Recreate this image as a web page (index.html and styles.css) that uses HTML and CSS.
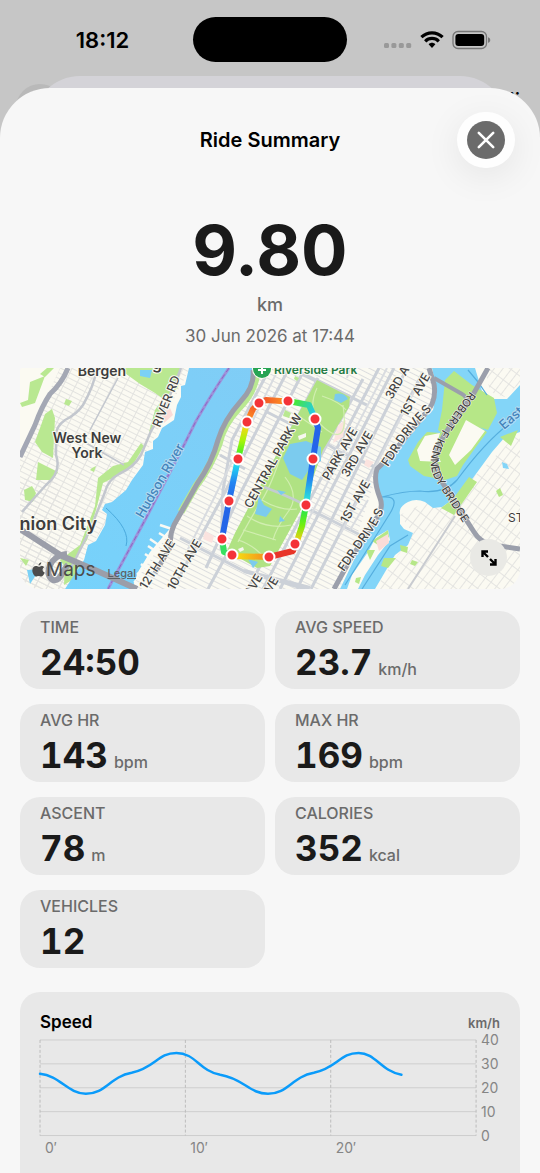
FILE: index.html
```html
<!DOCTYPE html>
<html lang="en">
<head>
    <meta charset="UTF-8">
    <meta name="viewport" content="width=device-width, initial-scale=1.0">
    <title>Ride Summary</title>
    <link rel="stylesheet" href="styles.css">
</head>
<body>
    <div class="status-bar">
        <div class="status-time">18:12</div>
        <div class="island"></div>
        <div class="status-icons">
            <svg width="28" height="18" viewBox="0 0 28 18" fill="#999">
                <rect x="0" y="12" width="5" height="5" rx="1.5"/>
                <rect x="7.4" y="12" width="5" height="5" rx="1.5"/>
                <rect x="14.8" y="12" width="5" height="5" rx="1.5"/>
                <rect x="22.2" y="12" width="5" height="5" rx="1.5"/>
            </svg>
            <svg width="24" height="18" viewBox="0 0 24 18" fill="none" stroke="#000" stroke-width="3.2">
                <path d="M1.4 6.2C7.5 .3 16.5 .3 22.6 6.2"/>
                <path d="M5.2 10.3C9 6.5 15 6.5 18.8 10.3"/>
                <path d="M8.6 13.2C10.5 11.2 13.5 11.2 15.4 13.2L12 17Z" fill="#000" stroke="none"/>
            </svg>
            <svg width="39" height="20" viewBox="0 0 39 20">
                <rect x="1" y="1.5" width="33.5" height="17" rx="5" fill="none" stroke="#777" stroke-width="1.3"/>
                <rect x="3.4" y="4" width="28.8" height="12" rx="3" fill="#000"/>
                <path d="M36 7.2c3 .6 3 5 0 5.6z" fill="#777"/>
            </svg>
        </div>
    </div>
    <div class="back-layer">
        <span class="back-circle"></span>
        <span class="back-more">···</span>
        <div class="back-sheet"></div>
    </div>

    <main class="sheet">
        <header class="sheet-header">
            <h1>Ride Summary</h1>
            <button class="close-button" aria-label="Close">
                <svg width="38" height="38" viewBox="0 0 38 38">
                    <circle cx="19" cy="19" r="19" fill="#6b6b6b"/>
                    <path d="M11.8 11.8L26.2 26.2M26.2 11.8L11.8 26.2" stroke="#fff" stroke-width="2.6" stroke-linecap="round"/>
                </svg>
            </button>
        </header>

        <section class="distance">
            <div class="distance-value">9.80</div>
            <div class="distance-unit">km</div>
            <div class="ride-date">30 Jun 2026 at 17:44</div>
        </section>

        <section class="map">
            <svg class="map-canvas" viewBox="20 368 500 221">
                <defs>
                    <pattern id="grid-west" width="11" height="5" patternUnits="userSpaceOnUse" patternTransform="rotate(27)">
                        <path d="M0 .5H11M.5 0V5" stroke="#e3e3e0" fill="none"/>
                    </pattern>
                    <pattern id="grid-city" width="16" height="5" patternUnits="userSpaceOnUse" patternTransform="rotate(27)">
                        <path d="M0 .5H16" stroke="#dddedf" fill="none"/>
                    </pattern>
                    <pattern id="grid-east" width="7" height="13" patternUnits="userSpaceOnUse" patternTransform="rotate(37)">
                        <path d="M0 .5H7M.5 0V13" stroke="#e4e4e1" fill="none"/>
                    </pattern>
                    <linearGradient id="river" x1="0" x2="1" y1="1" y2="0">
                        <stop offset="0" stop-color="#76d2fb"/>
                        <stop offset="1" stop-color="#80cdf6"/>
                    </linearGradient>
                    <linearGradient id="seg1" gradientUnits="userSpaceOnUse" x1="247" y1="422" x2="259" y2="403"><stop stop-color="#ff9a20"/><stop offset="1" stop-color="#f04a2a"/></linearGradient>
                    <linearGradient id="seg2" gradientUnits="userSpaceOnUse" x1="259" y1="0" x2="288" y2="0"><stop stop-color="#f04a2a"/><stop offset="1" stop-color="#ff9a20"/></linearGradient>
                    <linearGradient id="seg3" gradientUnits="userSpaceOnUse" x1="290" y1="401" x2="315" y2="415"><stop stop-color="#4fee10"/><stop offset="1" stop-color="#20c8f8"/></linearGradient>
                    <linearGradient id="seg5" gradientUnits="userSpaceOnUse" x1="0" y1="462" x2="0" y2="503"><stop stop-color="#2465e8"/><stop offset=".4" stop-color="#2386f2"/><stop offset="1" stop-color="#2df0d8"/></linearGradient>
                    <linearGradient id="seg6" gradientUnits="userSpaceOnUse" x1="0" y1="508" x2="0" y2="542"><stop stop-color="#20e550"/><stop offset=".5" stop-color="#70f010"/><stop offset="1" stop-color="#ffc818"/></linearGradient>
                    <linearGradient id="seg8" gradientUnits="userSpaceOnUse" x1="235" y1="0" x2="267" y2="0"><stop stop-color="#f6e010"/><stop offset="1" stop-color="#f48c20"/></linearGradient>
                    <linearGradient id="seg11" gradientUnits="userSpaceOnUse" x1="0" y1="499" x2="0" y2="462"><stop stop-color="#2468e8"/><stop offset=".45" stop-color="#2386f2"/><stop offset="1" stop-color="#22e8f0"/></linearGradient>
                    <linearGradient id="seg12" gradientUnits="userSpaceOnUse" x1="0" y1="456" x2="0" y2="425"><stop stop-color="#38ee28"/><stop offset=".5" stop-color="#a8f40a"/><stop offset="1" stop-color="#ffd418"/></linearGradient>
                </defs>

                <!-- land -->
                <rect x="20" y="368" width="500" height="221" fill="#fbfaf2"/>
                <path d="M60 368H190L132 480L65 589H20V455Z" fill="url(#grid-west)"/>
                <path d="M20 480L56 470L70 589H20Z" fill="url(#grid-west)"/>
                <path d="M257 368H433L435 400L375 480L340 589H130L185 510L215 440Z" fill="url(#grid-city)"/>
                <path d="M520 432L473 478L400 515L413 533L375 589H520Z" fill="url(#grid-east)"/>

                <!-- parks, west side -->
                <g fill="#b9e891">
                    <path d="M30 382L45 376L35 403L22 407L20 403L28 400ZM47 368H54L45 377L40 374Z"/>
                    <path d="M45 414L52 409L55 418L53 458L42 452L35 442Z"/>
                    <path d="M38 462L58 472L52 480H36Z"/>
                    <path d="M118 368H160L180 368L178 388L162 398L155 393L140 384Z"/>
                    <path d="M66 399L72 401L69 406L64 404ZM92 468L96 466L94 472L90 470Z"/>
                    <path d="M24 490L32 486L36 493L33 502L25 500Z"/>
                    <path d="M141 443L144 446L134 463L119 475L103 483L96 510L87 540L67 570L60 560L80 545L95 506L98 478L113 466L128 462Z"/>
                    <path d="M155 410L163 398L156 425L149 432ZM65 560L80 565L72 580L64 585ZM20 558L29 560L26 566Z"/>
                </g>
                <path d="M162 415L170 408L173 415L164 423Z" fill="#fbdcd8"/>
                <path d="M140 370h12l-2 8l-10-2zM27 570L40 569L34 578L30 584Z" fill="#7bd1f5"/>

                <!-- west roads -->
                <g fill="none" stroke="#c3c7ce" stroke-width="2.5">
                    <path d="M97 368Q94 386 83 405Q77 414 65 420Q55 427 56 438V455Q62 472 46 485Q35 497 22 512"/>
                    <path d="M181 368Q168 404 151 431L141 455Q134 467 119 474Q108 480 105 492L90 530L70 570"/>
                    <path d="M118 378L90 430M86 443L124 465" stroke-width="1.5"/>
                </g>
                <path d="M68 368Q62 383 50 394Q42 406 35 425L20 457" fill="none" stroke="#a4a8b4" stroke-width="5"/>

                <!-- Hudson -->
                <path d="M189 368L185 385L181 386V397L177 405L174 420L162 428L158 437L153 441V449L145 452L143 465L132 480L126 490L112 502L105 504L102 510L107 514L105 525L96 541L88 545L84 560L76 572L65 589H132L138 572L150 552L173 525L197 488L210 462L217 438L230 415L252 388L257 368Z" fill="url(#river)"/>
                <path d="M257 368Q257 390 238 409Q223 425 219 444Q210 468 196 486L181 512" fill="none" stroke="#b9e891" stroke-width="7"/>
                <path d="M106 508Q131 530 126 546" fill="none" stroke="#4aa9dc"/>
                <path d="M229 368Q214 390 196 421L180 453L145 520L108 589" fill="none" stroke="#a77fd0" stroke-width="3" opacity=".75"/>
                <path d="M229 368Q214 390 196 421L180 453L145 520L108 589" fill="none" stroke="#8b66c4" stroke-dasharray="5 3"/>
                <path d="M160 525l12 4M159 533l10 6M150 539l13 9M148 546l12 8M145 554l12 8M141 564l10 8M137 573l9 8M134 581l9 6" stroke="#fafaf4" stroke-width="2.5"/>
                <path d="M253 370Q255 386 241 401Q224 420 218 440Q212 463 197 484L174 525Q169 536 171 546L155 573" fill="none" stroke="#9b9ea9" stroke-width="5"/>
                <path d="M20 529L62 556L95 570L137 589M67 554C50 555 43 575 53 580C61 582 62 570 68 565" fill="none" stroke="#9b9ea9" stroke-width="6"/>

                <!-- avenues and cross streets -->
                <g fill="none" stroke="#ccd1d8" stroke-width="3">
                    <path d="M289 368L225 492L198 542L173 589M303 372L240 494L206 568"/>
                    <path d="M270 368L232 440L223 490L221 550"/>
                    <path d="M318 378L227 554L208 589M363 379L258 570L248 589M379 368L263 589"/>
                    <path d="M394 368L280 589M407 368L297 589M423 372L311 589"/>
                    <path d="M180 538L244 571L305 589M220 455L245 469M265 411L312 435L340 452L375 467M264 487L325 517L370 540M317 380L367 405"/>
                    <path d="M244 571L310 588M290 368L350 397" stroke-width="4"/>
                </g>
                <g fill="none" stroke="#d9dce0" stroke-width="2">
                    <path d="M279 368L213 500L185 555M350 368L347 378M387 368L290 555M415 390L340 535M368 500L350 530"/>
                </g>
                <path d="M338 425L346 420L343 437L333 443ZM205 531L214 536L212 543L203 539ZM366 459L374 462L369 468L364 465Z" fill="#fbe3df"/>

                <!-- Central Park -->
                <path d="M317 380L350 397L349 407L323 450L303 506L270 566L257 568L227 551L235 533L297 416Z" fill="#b0e283"/>
                <g fill="none" stroke="#d1eeb0" stroke-width="1.2">
                    <path d="M317 388Q305 414 327 430T343 405M322 396Q340 402 346 410M283 450Q271 486 262 500T238 542M285 477Q300 496 288 512T273 540"/>
                    <path d="M247 516Q267 530 291 525M262 500Q280 511 297 509M238 540Q255 545 269 563M243 530L276 540M300 417L322 432"/>
                </g>
                <path d="M264 487Q280 493 293 499T306 507" fill="none" stroke="#c3ccd0" stroke-width="2.5"/>
                <g fill="#7bcbee">
                    <path d="M290 444L306 441L321 447L321 461L310 468L302 480L290 474L283 458Z"/>
                    <path d="M335 394Q344 392 348 399L341 403L334 400ZM258 494L264 505L272 509L266 517L255 514L258 502ZM277 490L286 492L281 495ZM280 516L285 521L279 522ZM248 559L258 562L253 568Z"/>
                </g>
                <path d="M298 436l8-3v4l-7 3zM238 549l5-2 1 3-4 2z" fill="#f7f7ef"/>
                <path d="M295 376l4 2-2 3-3-2zM285 410l6 3-2 5-6-2z" fill="#b9e891"/>

                <!-- East River -->
                <path d="M432 368H480L494 399H507L520 385V432L505 437L492 452L473 478L455 498L442 507L433 508L425 502Q416 498 408 502Q398 507 400 515V524L404 529L413 533L408 545L395 555L385 572L375 589H340L365 537L382 507L375 482L378 468L405 435L433 410L437 390Z" fill="#83d5f8"/>
                <path d="M475 368H520V384L506 399H492L482 391Z" fill="#fbfaf2"/>
                <path d="M485 368H520V383L505 397L490 392Z" fill="url(#grid-east)"/>
                <path d="M388 530L390 540L378 555L365 575L358 589H347L352 575L368 552L376 537Z" fill="#fbfaf2"/>
                <path d="M445 380L454 371L472 385L494 398L497 413L488 430L470 424L450 440L438 430L442 410Z" fill="#b6e787"/>
                <path d="M427 432L440 433L448 428L468 419L487 432L473 451L463 465L457 476L445 480L424 476L410 466L408 460L418 442Z" fill="#b6e787"/>
                <path d="M425 436L440 433L435 450L441 462L420 461L417 450ZM466 420L485 431L471 450L455 465L449 455Z" fill="#fbfaf2"/>
                <path d="M469 477L477 482L454 515L441 508L453 499Z" fill="#b6e787"/>
                <path d="M388 530L389 537L378 545L372 541ZM366 550L375 550L370 560ZM384 558L396 558L388 568L381 566ZM400 545L408 547L407 553L401 551ZM356 578l5-1-2 7-4-2zM500 437L518 430L511 446L506 442ZM405 407l6 5-4 2-6-2z" fill="#b6e787"/>
                <path d="M376 541L388 534L389 543L379 551Z" fill="#fbdcd8"/>
                <path d="M412 560l6 2-3 4-5-2zM500 488l-4 3 3 6 4-2z" fill="#b6e787"/>
                <path d="M502 462l5 2 2 5-6-1z" fill="#83d5f8"/>
                <g fill="none" stroke="#55aede" stroke-width="1.2">
                    <path d="M520 416Q490 435 457 480Q445 494 420 491Q404 491 382 497Q402 495 389 515L345 585M408 535L390 546L362 589"/>
                    <path d="M468 370Q479 382 487 395"/>
                </g>
                <path d="M455 516L408 589" stroke="#c8cbd0" stroke-width="2"/>
                <g fill="none" stroke="#9b9fab" stroke-width="5">
                    <path d="M429 368L434 384Q437 402 425 414L390 456L377 469Q373 480 380 498Q384 508 376 519L350 560L334 589"/>
                    <path d="M488 368L474 393C442 437 424 457 442 482L474 532Q480 542 492 545L520 549"/>
                    <path d="M434 378L462 394Q471 399 463 412" stroke-width="4"/>
                </g>

                <!-- place names -->
                <g class="place-label">
                    <text x="102" y="376" font-size="14" text-anchor="middle">Bergen</text>
                    <text x="152" y="369" font-size="16">g</text>
                    <text x="87" y="443" font-size="14" text-anchor="middle">West New</text>
                    <text x="87" y="458" font-size="14" text-anchor="middle">York</text>
                    <text x="97" y="530" font-size="18" text-anchor="end">Union City</text>
                    <text x="508" y="522" font-size="12" class="district">STEINWAY</text>
                </g>
                <g class="park-label">
                    <circle cx="262" cy="369" r="9"/>
                    <path d="M262 366V374M258 370H266" stroke="#fff" stroke-width="2"/>
                    <text x="274" y="374" font-size="12">Riverside Park</text>
                </g>
                <g class="water-label">
                    <text transform="translate(143 519) rotate(-60)">Hudson River</text>
                    <text transform="translate(504 430) rotate(-41)">East River</text>
                </g>
                <defs>
                    <path id="fdr-north" d="M388 467L405 440L421 421Q432 411 440 396"/>
                    <path id="fdr-south" d="M344 572L365 542Q382 520 388 498"/>
                    <path id="rfk" d="M470 391C438 435 420 457 438 484L470 534L480 550"/>
                </defs>
                <g class="street-label">
                    <text transform="translate(160 428) rotate(-68)">RIVER RD</text>
                    <text transform="translate(146 590) rotate(-58)">12TH AVE</text>
                    <text transform="translate(174 591) rotate(-60)">10TH AVE</text>
                    <text transform="translate(251 509) rotate(-61)">CENTRAL PARK W</text>
                    <text transform="translate(251 597) rotate(-59)">AVE</text>
                    <text transform="translate(267 600) rotate(-59)">AVE</text>
                    <text transform="translate(329 481) rotate(-60)">PARK AVE</text>
                    <text transform="translate(348 478) rotate(-60)">3RD AVE</text>
                    <text transform="translate(392 400) rotate(-60)">3RD AVE</text>
                    <text transform="translate(407 417) rotate(-60)">1ST AVE</text>
                    <text transform="translate(347 524) rotate(-60)">1ST AVE</text>
                    <text><textPath href="#fdr-north">FDR DRIVE S</textPath></text>
                    <text><textPath href="#fdr-south">FDR DRIVE S</textPath></text>
                    <text class="bridge"><textPath href="#rfk">ROBERT F KENNEDY BRIDGE</textPath></text>
                </g>

                <!-- ride -->
                <g class="route">
                    <path d="M247 422L253 409L259 403" stroke="url(#seg1)"/>
                    <path d="M259 403L266 400L288 401.5" stroke="url(#seg2)"/>
                    <path d="M288 401L309 405L315 419" stroke="url(#seg3)"/>
                    <path d="M315 419L318 428L313 459" stroke="#2465e8"/>
                    <path d="M313 459L306 505" stroke="url(#seg5)"/>
                    <path d="M306 505L302 526L296 544" stroke="url(#seg6)"/>
                    <path d="M295 544L293 551L269 557" stroke="#e83528"/>
                    <path d="M269 557L232 556" stroke="url(#seg8)"/>
                    <path d="M232 555L224 552L222 539" stroke="#36e060"/>
                    <path d="M222 539L229 501" stroke="#2465e8"/>
                    <path d="M229 501L238 459" stroke="url(#seg11)"/>
                    <path d="M238 459L247 422" stroke="url(#seg12)"/>
                </g>
                <g class="route-dots">
                    <circle cx="259" cy="403" r="5.5"/>
                    <circle cx="288" cy="401" r="5.5"/>
                    <circle cx="315" cy="419" r="5.5"/>
                    <circle cx="313" cy="459" r="5.5"/>
                    <circle cx="306" cy="505" r="5.5"/>
                    <circle cx="295" cy="544" r="5.5"/>
                    <circle cx="269" cy="557" r="5.5"/>
                    <circle cx="232" cy="555" r="5.5"/>
                    <circle cx="222" cy="539" r="5.5"/>
                    <circle cx="229" cy="501" r="5.5"/>
                    <circle cx="238" cy="459" r="5.5"/>
                    <circle cx="247" cy="422" r="5.5"/>
                </g>
            </svg>
            <div class="map-credit">
                <span class="map-brand">
                    <svg width="13" height="15" viewBox="0 0 13 15" fill="#4c4c4c">
                        <path d="M9.3.2C9.4 2 8.1 3.600 6.5 3.600C6.300 2 7.700.4 9.300.2ZM12.200 5.200C9.900 6.600 10.200 9.500 12.700 10.500C12 12.500 10.700 14.600 9.200 14.600C8.200 14.600 7.900 14 6.700 14C5.500 14 5 14.600 4.200 14.600C2.400 14.600.3 11.300.3 8.300C.3 5.600 2 4 3.900 4C5.100 4 5.900 4.700 6.800 4.700C7.600 4.700 8.400 3.900 9.700 3.900C10.700 3.900 11.600 4.400 12.200 5.200Z"/>
                    </svg>
                    Maps
                </span>
                <a href="#">Legal</a>
            </div>
            <button class="expand-button" aria-label="Expand map">
                <svg width="18" height="18" viewBox="0 0 18 18" fill="none" stroke="#000" stroke-width="2.4">
                    <path d="M2.5 8V2.500H8M2.500 2.500L8 8M15.500 10V15.500H10M15.500 15.500L10 10"/>
                </svg>
            </button>
        </section>

        <section class="stats">
            <div class="stat">
                <div class="stat-label">TIME</div>
                <div class="stat-value">24:50</div>
            </div>
            <div class="stat">
                <div class="stat-label">AVG SPEED</div>
                <div class="stat-value">23.7 <span>km/h</span></div>
            </div>
            <div class="stat">
                <div class="stat-label">AVG HR</div>
                <div class="stat-value">143 <span>bpm</span></div>
            </div>
            <div class="stat">
                <div class="stat-label">MAX HR</div>
                <div class="stat-value">169 <span>bpm</span></div>
            </div>
            <div class="stat">
                <div class="stat-label">ASCENT</div>
                <div class="stat-value">78 <span>m</span></div>
            </div>
            <div class="stat">
                <div class="stat-label">CALORIES</div>
                <div class="stat-value">352 <span>kcal</span></div>
            </div>
            <div class="stat">
                <div class="stat-label">VEHICLES</div>
                <div class="stat-value">12</div>
            </div>
        </section>

        <section class="chart-card">
            <div class="chart-header">
                <h2>Speed</h2>
                <span>km/h</span>
            </div>
            <svg class="chart" viewBox="0 0 462 124">
                <path class="grid-line" d="M0 7H438M0 31H438M0 55H438M0 79H438M0 103H438"/>
                <path class="tick-line" d="M0 7V103M146 7V103M292 7V103M438 7V103"/>
                <path class="speed-line" d="M0 41C20 43 28 61 46 61C66 61 70 44 92 40C116 35 118 20 137 20C156 20 160 38 181 42C205 46 210 61 229 61C249 61 253 44 275 40C299 35 301 20 320 20C337 20 342 38 363 42"/>
                <g class="axis-label">
                    <text x="443" y="12">40</text>
                    <text x="443" y="36">30</text>
                    <text x="443" y="60">20</text>
                    <text x="443" y="84">10</text>
                    <text x="443" y="108">0</text>
                    <text x="5" y="121">0′</text>
                    <text x="151" y="121">10′</text>
                    <text x="297" y="121">20′</text>
                </g>
            </svg>
        </section>
    </main>
</body>
</html>
```
FILE: styles.css
```css
* {
    box-sizing: border-box;
}
body {
    margin: 0;
    min-height: 100vh;
    display: flex;
    flex-direction: column;
    background-color: #c6c6c6;
    color: #1a1a1a;
    font-family: Inter, "Liberation Sans", sans-serif;
}
h1, h2 {
    margin: 0;
}
button {
    padding: 0;
    border: none;
    cursor: pointer;
    display: flex;
    align-items: center;
    justify-content: center;
}

/* status bar */
.status-bar {
    display: grid;
    grid-template-columns: 1fr 154px 1fr;
    align-items: center;
    height: 76px;
    padding-top: 3px;
    color: #000;
}
.status-time {
    padding-left: 12px;
    font-size: 22px;
    font-weight: 600;
    text-align: center;
}
.island {
    height: 45px;
    border-radius: 23px;
    background-color: #000;
}
.status-icons {
    display: flex;
    justify-content: center;
    align-items: center;
    gap: 8px;
    padding-right: 13px;
}

/* dimmed screens under the sheet */
.back-layer {
    position: relative;
    height: 60px;
    margin-bottom: -48px;
    padding: 0 32px;
}
.back-sheet {
    position: relative;
    height: 60px;
    border-radius: 48px 48px 0 0;
    background-color: #d4d3d8;
}
.back-circle {
    position: absolute;
    left: 16px;
    top: 8px;
    width: 48px;
    height: 48px;
    border-radius: 50%;
    background-color: #b9b9b9;
}
.back-more {
    position: absolute;
    right: 20px;
    top: 7px;
    color: #000;
    font-size: 16px;
    font-weight: 700;
}

.sheet {
    position: relative;
    flex: 1;
    display: flex;
    flex-direction: column;
    padding: 24px 20px 0;
    border-radius: 50px 50px 0 0;
    background-color: #f7f7f7;
}
.sheet-header {
    display: grid;
    grid-template-columns: 1fr auto 1fr;
    align-items: center;
}
.sheet-header h1 {
    grid-column: 2;
    color: #000;
    font-size: 20px;
    font-weight: 600;
}
.close-button {
    justify-self: end;
    width: 58px;
    height: 56px;
    margin-right: 5px;
    border-radius: 28px;
    background-color: #fefefe;
    box-shadow: 0 8px 36px rgba(0, 0, 0, 0.08);
}

.distance {
    text-align: center;
    padding-top: 42px;
    color: #6b6b6b;
}
.distance-value {
    color: #1a1a1a;
    font-size: 69px;
    font-weight: 700;
    line-height: 80px;
}
.distance-unit {
    padding-top: 3px;
    font-size: 18px;
    font-weight: 500;
    line-height: 24px;
}
.ride-date {
    padding: 7px 0 20px;
    font-size: 17px;
    line-height: 24px;
}

.map {
    position: relative;
    overflow: hidden;
    border-radius: 2px 2px 20px 20px;
}
.map-canvas {
    display: block;
    width: 100%;
}
.place-label, .park-label, .water-label, .street-label {
    paint-order: stroke;
    stroke: #fbfaf2;
    stroke-width: 2px;
    stroke-linejoin: round;
}
.place-label {
    fill: #3d3d3d;
    font-weight: 600;
}
.place-label .district {
    font-weight: 400;
}
.park-label {
    fill: #257b45;
    font-weight: 600;
}
.park-label circle {
    fill: #27a453;
}
.water-label {
    fill: #4384bb;
    stroke: #b5dcf3;
    font-size: 13px;
    font-weight: 500;
}
.street-label {
    fill: #444;
    font-size: 12px;
    font-weight: 500;
}
.street-label .bridge {
    font-size: 11px;
    stroke-width: 1px;
}
.route {
    fill: none;
    stroke-width: 6px;
    stroke-linejoin: round;
}
.route-dots {
    fill: #f43338;
    stroke: #fff;
    stroke-width: 2px;
}
.map-credit {
    position: absolute;
    left: 12px;
    bottom: 7px;
    display: flex;
    align-items: baseline;
    gap: 12px;
    color: #4c4c4c;
}
.map-brand {
    display: flex;
    align-items: center;
    gap: 1px;
    font-size: 19px;
    line-height: 24px;
}
.map-brand svg {
    margin-bottom: 2px;
}
.map-credit a {
    color: #5c6265;
    font-size: 11px;
    font-weight: 500;
}
.expand-button {
    position: absolute;
    right: 13px;
    bottom: 13px;
    width: 37px;
    height: 37px;
    border-radius: 50%;
    background-color: #e9e9e5;
}

.stats {
    display: grid;
    grid-template-columns: 1fr 1fr;
    gap: 15px 10px;
    margin-top: 22px;
}
.stat {
    padding: 6px 20px 2px;
    border-radius: 20px;
    background-color: #e8e8e8;
}
.stat-label {
    color: #6b6b6b;
    font-size: 16px;
    font-weight: 500;
    line-height: 20px;
}
.stat-value {
    display: flex;
    align-items: baseline;
    gap: 6px;
    font-size: 35px;
    font-weight: 700;
    font-variant-numeric: tabular-nums;
    line-height: 50px;
    white-space: nowrap;
}
.stat-value span {
    color: #6b6b6b;
    font-size: 16px;
    font-weight: 500;
    line-height: 20px;
}

.chart-card {
    flex: 1;
    margin-top: 24px;
    padding: 20px 20px 0;
    border-radius: 20px 20px 0 0;
    background-color: #e8e8e8;
}
.chart-header {
    display: flex;
    align-items: baseline;
    justify-content: space-between;
    line-height: 20px;
}
.chart-header h2 {
    color: #000;
    font-size: 17px;
    font-weight: 600;
}
.chart-header span {
    color: #6b6b6b;
    font-size: 13px;
    font-weight: 600;
}
.chart {
    display: block;
    width: 100%;
    overflow: visible;
}
.grid-line {
    stroke: #cecece;
}
.tick-line {
    stroke: #bbb;
    stroke-dasharray: 3 2;
}
.speed-line {
    fill: none;
    stroke: #0a9bfa;
    stroke-width: 2.5px;
    stroke-linecap: round;
}
.axis-label {
    fill: #858585;
    font-size: 14px;
}
```
